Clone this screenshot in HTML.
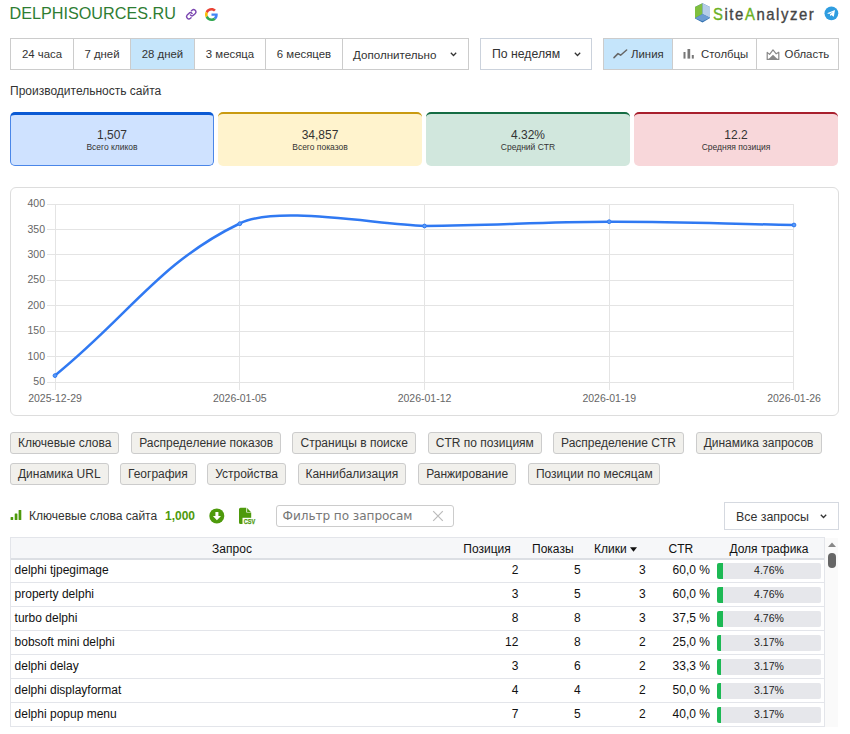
<!DOCTYPE html>
<html lang="ru">
<head>
<meta charset="utf-8">
<title>DELPHISOURCES.RU - SiteAnalyzer</title>
<style>
*{box-sizing:border-box;}
html,body{margin:0;padding:0;background:#fff;}
body{width:850px;height:734px;overflow:hidden;position:relative;font-family:"Liberation Sans",Arial,sans-serif;font-size:12.25px;color:#333;}
.abs{position:absolute;}
.title{left:9.5px;top:3.8px;font-size:16.2px;line-height:18px;color:#2e7d32;white-space:nowrap;}
.bgroup{position:absolute;top:38px;height:32px;border:1px solid #ccc;background:#fff;display:flex;}
.bgroup div{height:30px;line-height:31px;text-align:center;border-right:1px solid #ccc;font-size:11.4px;color:#333;white-space:nowrap;position:relative;}
.bgroup div:last-child{border-right:none;}
.bgroup div.act{background:#c5e5fb;}
.perf{left:10px;top:84px;font-size:12px;line-height:15px;color:#333;}
.card{position:absolute;top:111.6px;height:54px;width:204px;border-radius:5px;text-align:center;border-top:2.7px solid;}
.card .n{position:absolute;left:0;right:0;top:14.5px;font-size:12px;line-height:15px;color:#333;}
.card .l{position:absolute;left:0;right:0;top:28.3px;font-size:8.5px;line-height:11px;color:#333;}
.chartbox{left:10px;top:187px;width:829px;height:229px;border:1px solid #ddd;border-radius:6px;}
.tb{position:absolute;height:22px;line-height:20px;border:1px solid #ccc;border-radius:3px;background:#f1f0ec;font-size:12px;color:#333;text-align:center;white-space:nowrap;}
.kw{left:29px;top:509px;font-size:12px;line-height:15px;color:#333;white-space:nowrap;}
.kwn{left:165px;top:509px;font-size:12px;line-height:15px;color:#4e9a0c;font-weight:bold;}
.filter{left:276px;top:505.4px;width:178px;height:21.4px;border:1px solid #ccc;border-radius:3px;background:#fff;}
.filter span{position:absolute;left:5.6px;top:0;line-height:21.4px;font-family:"DejaVu Sans",Verdana,sans-serif;font-size:12.1px;letter-spacing:-0.06px;color:#777;white-space:nowrap;}
.sel2{left:724px;top:502px;width:115px;height:28px;border:1px solid #d5d9e0;background:#fff;overflow:hidden;}
.sel2 span{position:absolute;left:11px;top:6px;height:14.4px;overflow:hidden;font-size:12.4px;line-height:17.6px;color:#333;}
table.g{position:absolute;left:10px;top:537px;width:815px;border-collapse:collapse;table-layout:fixed;font-size:12px;color:#111;}
table.g th{height:21.3px;background:#f6f7f9;font-weight:normal;border-top:1px solid #e3e5ea;border-bottom:2px solid #dcdfe4;padding:1.5px 0 0 0;line-height:18px;color:#111;white-space:nowrap;}
table.g th span{position:relative;}
table.g td{height:24px;border-bottom:1px solid #e3e5ea;padding:0 0 2.6px 0;line-height:20px;white-space:nowrap;}
table.g td.q{text-align:left;padding-left:4.6px;}
table.g td.r{text-align:right;}
.bar{position:relative;display:block;margin-left:7px;top:1.3px;width:104px;height:16px;background:#e6e7eb;border-radius:2px;font-size:10.5px;line-height:15px;text-align:center;color:#222;}
.bar i{position:absolute;left:0;top:0;bottom:0;width:5.6px;background:#1db954;border-radius:2px 0 0 2px;}
</style>
</head>
<body>
<div class="abs title">DELPHISOURCES.RU</div>

<!-- link icon -->
<svg class="abs" style="left:185px;top:8px" width="12.5" height="12.5" viewBox="0 0 12 12"><g fill="none" stroke="#7a46b0" stroke-width="1.35" stroke-linecap="round"><path d="M5.2 6.8a2.2 2.2 0 0 0 3.1 0l1.6-1.6a2.2 2.2 0 0 0-3.1-3.1l-.6.6"/><path d="M6.8 5.2a2.2 2.2 0 0 0-3.1 0L2.1 6.8a2.2 2.2 0 0 0 3.1 3.1l.6-.6"/></g></svg>
<!-- google G -->
<svg class="abs" style="left:205.1px;top:7.5px" width="13" height="13" viewBox="0 0 48 48"><path fill="#EA4335" d="M24 9.5c3.54 0 6.71 1.22 9.21 3.6l6.85-6.85C35.9 2.38 30.47 0 24 0 14.62 0 6.51 5.38 2.56 13.22l7.98 6.19C12.43 13.72 17.74 9.5 24 9.5z"/><path fill="#4285F4" d="M46.98 24.55c0-1.57-.15-3.09-.38-4.55H24v9.02h12.94c-.58 2.96-2.26 5.48-4.78 7.18l7.73 6c4.51-4.18 7.09-10.36 7.09-17.65z"/><path fill="#FBBC05" d="M10.53 28.59c-.48-1.45-.76-2.99-.76-4.59s.27-3.14.76-4.59l-7.98-6.19C.92 16.46 0 20.12 0 24c0 3.88.92 7.54 2.56 10.78l7.97-6.19z"/><path fill="#34A853" d="M24 48c6.48 0 11.93-2.13 15.89-5.81l-7.73-6c-2.15 1.45-4.92 2.3-8.16 2.3-6.26 0-11.57-4.22-13.47-9.91l-7.98 6.19C6.51 42.62 14.62 48 24 48z"/></svg>

<!-- SiteAnalyzer logo -->
<svg class="abs" style="left:694px;top:2px" width="18" height="22" viewBox="694 2 18 22"><path d="M702.5 3.2 L710 7 V18 L702.5 22.6 L695 18.5 V7Z" fill="#2f6fae"/><path d="M695 7 L702.5 3.2 V14 L695 18.3Z" fill="#7fbf3f"/><path d="M702.5 3.2 L710 7 V17.8 L702.5 14Z" fill="#b5cde8"/><path d="M695 18.3 L702.5 14 L710 17.8 L702.5 21.3Z" fill="#6b9bd1"/></svg>
<div class="abs" style="left:713px;top:2px;font-size:16.2px;line-height:24px;color:#444;white-space:nowrap;letter-spacing:1.7px;transform-origin:0 0;transform:scaleX(0.92);-webkit-text-stroke:0.35px;"><span style="color:#6ab023">S</span>ite<span style="color:#6ab023">A</span>nalyzer</div>
<!-- telegram -->
<svg class="abs" style="left:824px;top:6px" width="15" height="15" viewBox="0 0 15 15"><circle cx="7.4" cy="7.3" r="6.9" fill="#2f9de0"/><path d="M3 7.2 L11 3.9 L9.8 10.8 L7.2 9 L6.1 10.2 L6 8.3 L9.5 5.4 L5.1 7.9Z" fill="#fff"/></svg>

<!-- period buttons -->
<div class="bgroup" style="left:10px;width:459px;">
 <div style="width:63px">24 часа</div>
 <div style="width:57px">7 дней</div>
 <div class="act" style="width:64px">28 дней</div>
 <div style="width:71px">3 месяца</div>
 <div style="width:77px">6 месяцев</div>
 <div style="width:125px;text-align:left;padding-left:10px;font-size:11.6px">Дополнительно<svg class="abs" style="left:107px;top:13px" width="7" height="5" viewBox="0 0 7 5"><path d="M0.8 0.8 L3.5 3.5 L6.2 0.8" fill="none" stroke="#333" stroke-width="1.25"/></svg></div>
</div>
<div class="bgroup" style="left:480px;width:111.5px;border-color:#cbd2dc">
 <div style="width:109.5px;text-align:left;padding-left:11px;font-size:12.25px">По неделям<svg class="abs" style="left:93px;top:13px" width="7" height="5" viewBox="0 0 7 5"><path d="M0.8 0.8 L3.5 3.5 L6.2 0.8" fill="none" stroke="#333" stroke-width="1.25"/></svg></div>
</div>
<div class="bgroup" style="left:603px;width:236px;">
 <div class="act" style="width:69px;text-align:left;padding-left:27px">Линия<svg class="abs" style="left:9px;top:10px" width="15" height="10" viewBox="0 0 15 10"><path d="M1 8.6 L5 4.6 L7.6 6.2 L13.6 1" fill="none" stroke="#666" stroke-width="1.5" stroke-linejoin="round" stroke-linecap="round"/></svg></div>
 <div style="width:84px;text-align:left;padding-left:28px">Столбцы<svg class="abs" style="left:10px;top:9px" width="12" height="12" viewBox="0 0 12 12"><rect x="0.5" y="4" width="2" height="6.6" fill="#777"/><rect x="4.5" y="1" width="2.7" height="9.6" fill="#777"/><rect x="8.8" y="7" width="2" height="3.6" fill="#777"/></svg></div>
 <div style="width:81px;text-align:left;padding-left:27.6px">Область<svg class="abs" style="left:9px;top:9.5px" width="14" height="12" viewBox="0 0 14 12"><path d="M1.2 3.4 L3.6 5.4 L7 0.9 L10.2 4.8 L12.8 3.2 V10.4 H1.2Z" fill="none" stroke="#888" stroke-width="1.2" stroke-linejoin="round"/><path d="M2.6 10 L7 5.8 L11.4 10Z" fill="#888"/></svg></div>
</div>

<div class="abs perf">Производительность сайта</div>

<!-- cards -->
<div class="card" style="left:10px;background:#cfe2ff;border:1.4px solid #4a86e8;border-top:3.4px solid #0b5ad4;"><div class="n" style="top:13.8px">1,507</div><div class="l" style="top:27.7px">Всего кликов</div></div>
<div class="card" style="left:218px;background:#fff3cd;border-top-color:#c99a10;"><div class="n">34,857</div><div class="l">Всего показов</div></div>
<div class="card" style="left:426px;background:#d1e7dd;border-top-color:#146c43;"><div class="n">4.32%</div><div class="l">Средний CTR</div></div>
<div class="card" style="left:634px;background:#f8d7da;border-top-color:#a81f2d;"><div class="n">12.2</div><div class="l">Средняя позиция</div></div>

<!-- chart -->
<div class="abs chartbox"></div>
<svg class="abs" style="left:0;top:187px" width="850" height="230" viewBox="0 187 850 230" font-family="Liberation Sans, Arial, sans-serif" font-size="10.5" fill="#666">
 <g stroke="#e4e4e4" stroke-width="1" shape-rendering="crispEdges">
  <line x1="47" y1="204.5" x2="794" y2="204.5"/>
  <line x1="47" y1="229.5" x2="794" y2="229.5"/>
  <line x1="47" y1="254.5" x2="794" y2="254.5"/>
  <line x1="47" y1="280.5" x2="794" y2="280.5"/>
  <line x1="47" y1="305.5" x2="794" y2="305.5"/>
  <line x1="47" y1="331.5" x2="794" y2="331.5"/>
  <line x1="47" y1="356.5" x2="794" y2="356.5"/>
  <line x1="47" y1="382.5" x2="794" y2="382.5"/>
  <line x1="55.5" y1="204" x2="55.5" y2="390"/>
  <line x1="239.5" y1="204" x2="239.5" y2="390"/>
  <line x1="424.5" y1="204" x2="424.5" y2="390"/>
  <line x1="609.5" y1="204" x2="609.5" y2="390"/>
  <line x1="793.5" y1="204" x2="793.5" y2="390"/>
 </g>
 <g text-anchor="end">
  <text x="45" y="207.2">400</text>
  <text x="45" y="232.6">350</text>
  <text x="45" y="258">300</text>
  <text x="45" y="283.4">250</text>
  <text x="45" y="308.8">200</text>
  <text x="45" y="334.2">150</text>
  <text x="45" y="359.6">100</text>
  <text x="45" y="385">50</text>
 </g>
 <g text-anchor="middle">
  <text x="55" y="401.5">2025-12-29</text>
  <text x="239.75" y="401.5">2026-01-05</text>
  <text x="424.5" y="401.5">2026-01-12</text>
  <text x="609.25" y="401.5">2026-01-19</text>
  <text x="794" y="401.5">2026-01-26</text>
 </g>
 <path d="M55 375.5 C129.3 315.3 159.5 262.2 239.7 223.5 C276 205.2 372.9 223.9 424.4 225.9 C498.4 225.6 535.3 221.9 609.1 221.7 C683.1 221.5 720.1 223.7 793.8 225" fill="none" stroke="#3079f2" stroke-width="2.5" stroke-linecap="round"/>
 <g fill="#5b9bf5" stroke="#3079f2" stroke-width="1">
  <circle cx="55" cy="375.6" r="1.9"/><circle cx="239.8" cy="223.7" r="1.9"/><circle cx="424.5" cy="226" r="1.9"/><circle cx="609.2" cy="221.7" r="1.9"/><circle cx="794" cy="225" r="1.9"/>
 </g>
</svg>

<!-- tab buttons -->
<div class="tb" style="left:10px;top:432.3px;width:109.4px">Ключевые слова</div>
<div class="tb" style="left:131px;top:432.3px;width:150.3px">Распределение показов</div>
<div class="tb" style="left:292.4px;top:432.3px;width:123.6px">Страницы в поиске</div>
<div class="tb" style="left:428px;top:432.3px;width:113.7px">CTR по позициям</div>
<div class="tb" style="left:553px;top:432.3px;width:131px">Распределение CTR</div>
<div class="tb" style="left:695.5px;top:432.3px;width:126.1px">Динамика запросов</div>
<div class="tb" style="left:10px;top:463.3px;width:98.6px">Динамика URL</div>
<div class="tb" style="left:119.8px;top:463.3px;width:76.2px">География</div>
<div class="tb" style="left:207.4px;top:463.3px;width:78.4px">Устройства</div>
<div class="tb" style="left:297.8px;top:463.3px;width:108.2px">Каннибализация</div>
<div class="tb" style="left:418.3px;top:463.3px;width:97.7px">Ранжирование</div>
<div class="tb" style="left:528.3px;top:463.3px;width:132px">Позиции по месяцам</div>

<!-- section head -->
<svg class="abs" style="left:10px;top:508px" width="13" height="14" viewBox="10 508 13 14"><rect x="10.6" y="516.9" width="2.6" height="3.2" rx="0.5" fill="#4e9a0c"/><rect x="14.7" y="513.6" width="2.7" height="6.5" rx="0.5" fill="#4e9a0c"/><rect x="18.6" y="509.9" width="2.7" height="10.2" rx="0.5" fill="#4e9a0c"/></svg>
<div class="abs kw">Ключевые слова сайта</div>
<div class="abs kwn">1,000</div>
<svg class="abs" style="left:208px;top:507px" width="18" height="18" viewBox="208 507 18 18"><circle cx="216.8" cy="515.9" r="7.5" fill="#4e9a0c"/><path d="M215.4 512 H218.4 V516 H221 L216.9 520.3 L212.9 516 H215.4Z" fill="#fff"/></svg>
<svg class="abs" style="left:238px;top:507px" width="20" height="18" viewBox="238 507 20 18"><path d="M240.5 507.8 H246.3 V512.6 H251.2 V524 H240.5 A1.5 1.5 0 0 1 239 522.5 V509.3 A1.5 1.5 0 0 1 240.5 507.8Z" fill="#4e9a0c"/><path d="M247.1 508.1 L250.9 511.9 H247.1Z" fill="#4e9a0c"/><rect x="242.5" y="517.8" width="14" height="7" fill="#fff"/><text x="243.8" y="523.9" font-family="Liberation Sans, Arial, sans-serif" font-size="7.4" font-weight="bold" fill="#4e9a0c" stroke="#4e9a0c" stroke-width="0.25" textLength="11.4" lengthAdjust="spacingAndGlyphs">CSV</text></svg>
<div class="abs filter"><span>Фильтр по запросам</span><svg class="abs" style="left:154.6px;top:3.4px" width="12" height="12" viewBox="0 0 12 12"><path d="M1.2 1.2 L10.8 10.8 M10.8 1.2 L1.2 10.8" stroke="#bbb" stroke-width="1.2" fill="none"/></svg></div>
<div class="abs sel2"><span>Все запросы</span><svg class="abs" style="left:95.3px;top:11px" width="7" height="5" viewBox="0 0 7 5"><path d="M0.8 0.8 L3.5 3.5 L6.2 0.8" fill="none" stroke="#333" stroke-width="1.3"/></svg></div>

<!-- table -->
<table class="g">
 <colgroup><col style="width:444px"><col style="width:64.4px"><col style="width:62.2px"><col style="width:65.2px"><col style="width:64.2px"><col style="width:115px"></colgroup>
 <tr><th><span style="left:0px">Запрос</span></th><th><span style="left:0.8px">Позиция</span></th><th><span style="left:3.3px">Показы</span></th><th><span style="left:2.4px">Клики <svg width="7" height="5" viewBox="0 0 7 5" style="position:relative;top:-1px"><path d="M0 0.3 H7 L3.5 4.8Z" fill="#111"/></svg></span></th><th><span style="left:3px">CTR</span></th><th><span style="left:1.5px">Доля трафика</span></th></tr>
 <tr><td class="q">delphi tjpegimage</td><td class="r">2</td><td class="r">5</td><td class="r">3</td><td class="r">60,0 %</td><td><span class="bar"><i></i>4.76%</span></td></tr>
 <tr><td class="q">property delphi</td><td class="r">3</td><td class="r">5</td><td class="r">3</td><td class="r">60,0 %</td><td><span class="bar"><i></i>4.76%</span></td></tr>
 <tr><td class="q">turbo delphi</td><td class="r">8</td><td class="r">8</td><td class="r">3</td><td class="r">37,5 %</td><td><span class="bar"><i></i>4.76%</span></td></tr>
 <tr><td class="q">bobsoft mini delphi</td><td class="r">12</td><td class="r">8</td><td class="r">2</td><td class="r">25,0 %</td><td><span class="bar"><i style="width:3.8px"></i>3.17%</span></td></tr>
 <tr><td class="q">delphi delay</td><td class="r">3</td><td class="r">6</td><td class="r">2</td><td class="r">33,3 %</td><td><span class="bar"><i style="width:3.8px"></i>3.17%</span></td></tr>
 <tr><td class="q">delphi displayformat</td><td class="r">4</td><td class="r">4</td><td class="r">2</td><td class="r">50,0 %</td><td><span class="bar"><i style="width:3.8px"></i>3.17%</span></td></tr>
 <tr><td class="q">delphi popup menu</td><td class="r">7</td><td class="r">5</td><td class="r">2</td><td class="r">40,0 %</td><td><span class="bar"><i style="width:3.8px"></i>3.17%</span></td></tr>
</table>
<div class="abs" style="left:10px;top:537px;width:1px;height:190px;background:#e3e5ea"></div>
<div class="abs" style="left:824px;top:537px;width:1px;height:190px;background:#e3e5ea"></div>
<!-- scrollbar -->
<div class="abs" style="left:825px;top:538px;width:13px;height:189px;background:#fafafa"></div>
<svg class="abs" style="left:825px;top:538px" width="14" height="196" viewBox="0 0 14 196"><path d="M3 9 L7 4.5 L11 9Z" fill="#888"/><rect x="3" y="15" width="8" height="15" rx="4" fill="#666"/></svg>
</body>
</html>
